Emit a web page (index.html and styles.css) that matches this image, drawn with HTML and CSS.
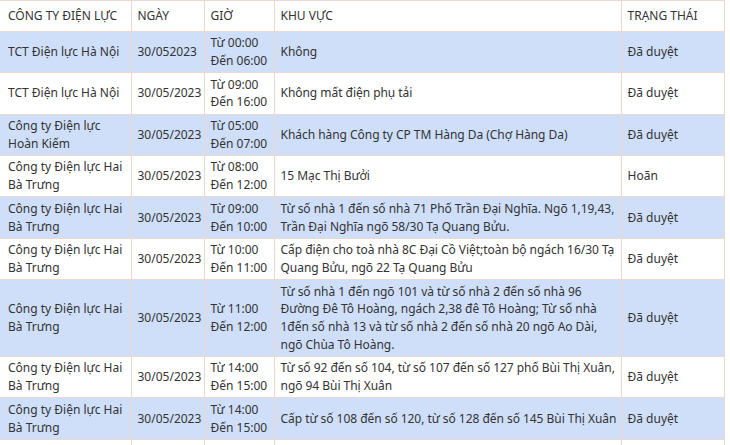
FILE: index.html
```html
<!DOCTYPE html>
<html lang="vi">
<head>
<meta charset="utf-8">
<title>Lịch cắt điện</title>
<link rel="stylesheet" href="styles.css">
</head>
<body>
<table class="schedule">
  <colgroup>
    <col class="c-company">
    <col class="c-date">
    <col class="c-time">
    <col class="c-area">
    <col class="c-status">
  </colgroup>
  <thead>
    <tr>
      <th>CÔNG TY ĐIỆN LỰC</th>
      <th>NGÀY</th>
      <th>GIỜ</th>
      <th>KHU VỰC</th>
      <th>TRẠNG THÁI</th>
    </tr>
  </thead>
  <tbody>
    <tr class="alt">
      <td>TCT Điện lực Hà Nội</td>
      <td>30/052023</td>
      <td>Từ 00:00<br>Đến 06:00</td>
      <td>Không</td>
      <td>Đã duyệt</td>
    </tr>
    <tr>
      <td>TCT Điện lực Hà Nội</td>
      <td>30/05/2023</td>
      <td>Từ 09:00<br>Đến 16:00</td>
      <td>Không mất điện phụ tải</td>
      <td>Đã duyệt</td>
    </tr>
    <tr class="alt">
      <td>Công ty Điện lực Hoàn Kiếm</td>
      <td>30/05/2023</td>
      <td>Từ 05:00<br>Đến 07:00</td>
      <td>Khách hàng Công ty CP TM Hàng Da (Chợ Hàng Da)</td>
      <td>Đã duyệt</td>
    </tr>
    <tr>
      <td>Công ty Điện lực Hai Bà Trưng</td>
      <td>30/05/2023</td>
      <td>Từ 08:00<br>Đến 12:00</td>
      <td>15 Mạc Thị Bưởi</td>
      <td>Hoãn</td>
    </tr>
    <tr class="alt">
      <td>Công ty Điện lực Hai Bà Trưng</td>
      <td>30/05/2023</td>
      <td>Từ 09:00<br>Đến 10:00</td>
      <td>Từ số nhà 1 đến số nhà 71 Phố Trần Đại Nghĩa. Ngõ 1,19,43, Trần Đại Nghĩa ngõ 58/30 Tạ Quang Bửu.</td>
      <td>Đã duyệt</td>
    </tr>
    <tr>
      <td>Công ty Điện lực Hai Bà Trưng</td>
      <td>30/05/2023</td>
      <td>Từ 10:00<br>Đến 11:00</td>
      <td>Cấp điện cho toà nhà 8C Đại Cồ Việt;toàn bộ ngách 16/30 Tạ Quang Bửu, ngõ 22 Tạ Quang Bửu</td>
      <td>Đã duyệt</td>
    </tr>
    <tr class="alt">
      <td>Công ty Điện lực Hai Bà Trưng</td>
      <td>30/05/2023</td>
      <td>Từ 11:00<br>Đến 12:00</td>
      <td>Từ số nhà 1 đến ngõ 101 và từ số nhà 2 đến số nhà 96 Đường Đê Tô Hoàng, ngách 2,38 đê Tô Hoàng; Từ số nhà 1đến số nhà 13 và từ số nhà 2 đến số nhà 20 ngõ Ao Dài, ngõ Chùa Tô Hoàng.</td>
      <td>Đã duyệt</td>
    </tr>
    <tr>
      <td>Công ty Điện lực Hai Bà Trưng</td>
      <td>30/05/2023</td>
      <td>Từ 14:00<br>Đến 15:00</td>
      <td>Từ số 92 đến số 104, từ số 107 đến số 127 phố Bùi Thị Xuân, ngõ 94 Bùi Thị Xuân</td>
      <td>Đã duyệt</td>
    </tr>
    <tr class="alt">
      <td>Công ty Điện lực Hai Bà Trưng</td>
      <td>30/05/2023</td>
      <td>Từ 14:00<br>Đến 15:00</td>
      <td>Cấp từ số 108 đến số 120, từ số 128 đến số 145 Bùi Thị Xuân</td>
      <td>Đã duyệt</td>
    </tr>
    <tr class="blank">
      <td></td>
      <td></td>
      <td></td>
      <td></td>
      <td></td>
    </tr>
  </tbody>
</table>
</body>
</html>
```

FILE: styles.css
```css
html, body {
  margin: 0;
  padding: 0;
  background: #ffffff;
}

body {
  font-family: "Noto Sans", "Open Sans", sans-serif;
  font-size: 12px;
  color: #333333;
  overflow: hidden;
}

.schedule {
  width: 724px;
  table-layout: fixed;
  border-collapse: collapse;
}

.c-company { width: 131px; }
.c-date { width: 73px; }
.c-time { width: 70px; }
.c-area { width: 347px; }
.c-status { width: 103px; }

.schedule th,
.schedule td {
  border: 1px solid #ecd8ce;
  text-align: left;
  vertical-align: middle;
  font-weight: 400;
  line-height: 17.7px;
}

.schedule th {
  padding: 6px 6px;
  background: #ffffff;
}

.schedule td {
  padding: 2.5px 6px;
}

.schedule td:nth-child(4) {
  padding-right: 0;
  letter-spacing: -0.04px;
}

.schedule th:first-child,
.schedule td:first-child {
  border-left: none;
  padding-left: 8px;
}

.schedule .alt td {
  background: #cfdffa;
}

.schedule .blank td {
  height: 36px;
}
```
